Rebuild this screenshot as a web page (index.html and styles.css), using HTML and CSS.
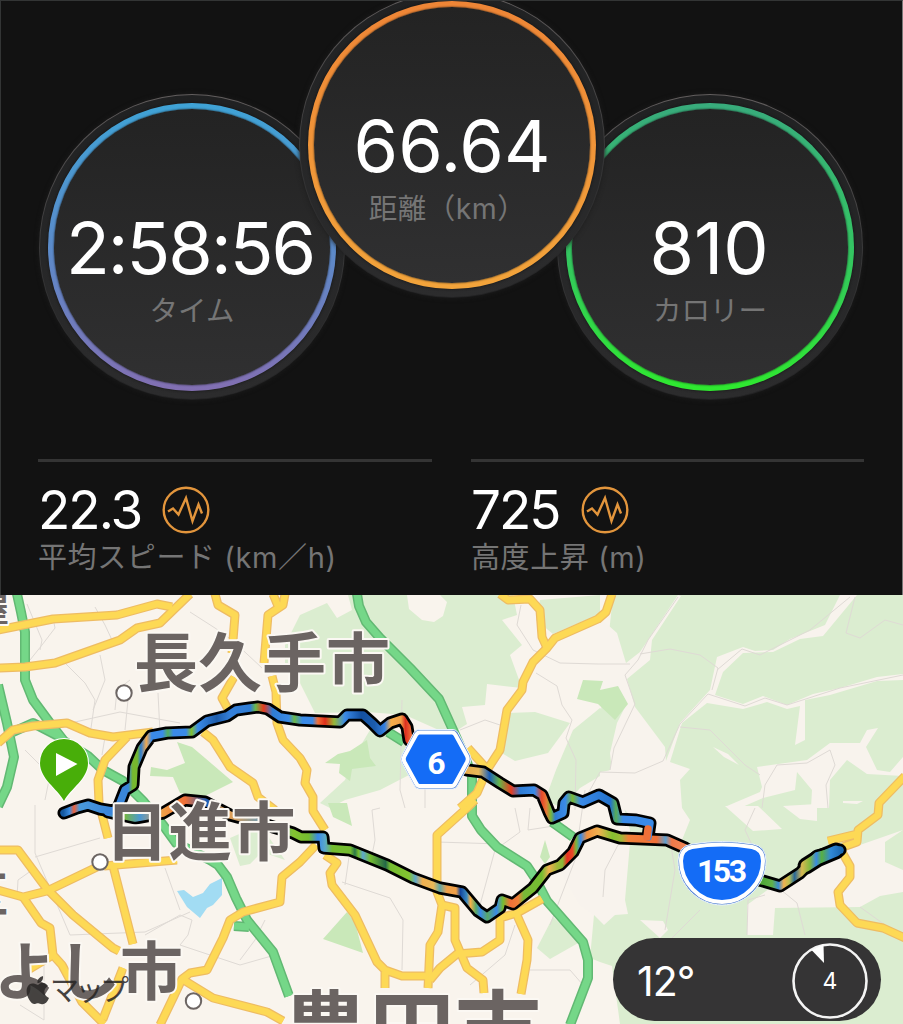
FILE: index.html
```html
<!DOCTYPE html>
<html lang="ja">
<head>
    <meta charset="UTF-8">
    <meta name="viewport" content="width=device-width, initial-scale=1.0">
    <title>サイクリング</title>
    <link rel="stylesheet" href="styles.css">
</head>
<body>
    <section class="summary">
        <div class="rings">
            <div class="ring time">
                <div class="ring_line">
                    <div class="ring_face">
                        <span class="ring_value">2:58:56</span>
                        <span class="ring_label">タイム</span>
                    </div>
                </div>
            </div>
            <div class="ring distance">
                <div class="ring_line">
                    <div class="ring_face">
                        <span class="ring_value">66.64</span>
                        <span class="ring_label">距離（km）</span>
                    </div>
                </div>
            </div>
            <div class="ring calorie">
                <div class="ring_line">
                    <div class="ring_face">
                        <span class="ring_value">810</span>
                        <span class="ring_label">カロリー</span>
                    </div>
                </div>
            </div>
        </div>
        <div class="stats">
            <div class="stat">
                <div class="stat_row">
                    <span class="stat_value">22.3</span>
                    <svg class="graph_icon" viewBox="0 0 48 48">
                        <circle cx="24" cy="24" r="22.3"/>
                        <path d="M6 25.5 L11 22.5 L16.5 28.5 L24 12 L30.5 35 L36.5 18.5 L40 27.5"/>
                    </svg>
                </div>
                <div class="stat_label">平均スピード (km／h)</div>
            </div>
            <div class="stat">
                <div class="stat_row">
                    <span class="stat_value">725</span>
                    <svg class="graph_icon" viewBox="0 0 48 48">
                        <circle cx="24" cy="24" r="22.3"/>
                        <path d="M6 25.5 L11 22.5 L16.5 28.5 L24 12 L30.5 35 L36.5 18.5 L40 27.5"/>
                    </svg>
                </div>
                <div class="stat_label">高度上昇 (m)</div>
            </div>
        </div>
    </section>

    <section class="map">
        <svg class="map_canvas" viewBox="0 595 903 429">
            <defs>
                <linearGradient id="upperColor" gradientUnits="userSpaceOnUse" x1="0" y1="0" x2="903" y2="0">
                    <stop offset="0.07" stop-color="#1458a0"/>
                    <stop offset="0.077" stop-color="#3a8be0"/>
                    <stop offset="0.082" stop-color="#f06038"/>
                    <stop offset="0.088" stop-color="#4a9ada"/>
                    <stop offset="0.12" stop-color="#3a86da"/>
                    <stop offset="0.142" stop-color="#3a86da"/>
                    <stop offset="0.147" stop-color="#76b82e"/>
                    <stop offset="0.152" stop-color="#76b82e"/>
                    <stop offset="0.156" stop-color="#2f7cd0"/>
                    <stop offset="0.162" stop-color="#f0a850"/>
                    <stop offset="0.168" stop-color="#3a8ae8"/>
                    <stop offset="0.18" stop-color="#3a8ae8"/>
                    <stop offset="0.186" stop-color="#52ae60"/>
                    <stop offset="0.192" stop-color="#3a8ae8"/>
                    <stop offset="0.206" stop-color="#3a8ae8"/>
                    <stop offset="0.212" stop-color="#80c030"/>
                    <stop offset="0.219" stop-color="#3a8ae8"/>
                    <stop offset="0.24" stop-color="#1d5cab"/>
                    <stop offset="0.255" stop-color="#3580da"/>
                    <stop offset="0.277" stop-color="#2e7cd4"/>
                    <stop offset="0.283" stop-color="#6bb84a"/>
                    <stop offset="0.292" stop-color="#e63a1e"/>
                    <stop offset="0.302" stop-color="#2e7cd4"/>
                    <stop offset="0.32" stop-color="#3a8ae8"/>
                    <stop offset="0.326" stop-color="#6bb84a"/>
                    <stop offset="0.335" stop-color="#3a8ae8"/>
                    <stop offset="0.346" stop-color="#3a8ae8"/>
                    <stop offset="0.352" stop-color="#f07038"/>
                    <stop offset="0.36" stop-color="#e02e1c"/>
                    <stop offset="0.37" stop-color="#96b838"/>
                    <stop offset="0.382" stop-color="#3a8ae8"/>
                    <stop offset="0.4" stop-color="#1350a0"/>
                    <stop offset="0.415" stop-color="#1c5cac"/>
                    <stop offset="0.426" stop-color="#3480e0"/>
                    <stop offset="0.433" stop-color="#f8ad48"/>
                    <stop offset="0.444" stop-color="#f0a048"/>
                    <stop offset="0.449" stop-color="#dd3020"/>
                    <stop offset="0.456" stop-color="#f07038"/>
                    <stop offset="0.52" stop-color="#e8b050"/>
                    <stop offset="0.53" stop-color="#e8b858"/>
                    <stop offset="0.542" stop-color="#1c60b8"/>
                    <stop offset="0.553" stop-color="#66b448"/>
                    <stop offset="0.566" stop-color="#e83c20"/>
                    <stop offset="0.576" stop-color="#2e7cd4"/>
                    <stop offset="0.592" stop-color="#3a8ae8"/>
                    <stop offset="0.6" stop-color="#e84828"/>
                    <stop offset="0.605" stop-color="#e87838"/>
                    <stop offset="0.61" stop-color="#78b838"/>
                    <stop offset="0.615" stop-color="#2e7cd4"/>
                    <stop offset="0.626" stop-color="#3a8ae8"/>
                    <stop offset="0.634" stop-color="#78b838"/>
                    <stop offset="0.643" stop-color="#3a8ae8"/>
                    <stop offset="0.676" stop-color="#2472cc"/>
                    <stop offset="0.682" stop-color="#56ac58"/>
                    <stop offset="0.69" stop-color="#3a8ae8"/>
                    <stop offset="0.72" stop-color="#3a8ae8"/>
                </linearGradient>
                <linearGradient id="lowerColor" gradientUnits="userSpaceOnUse" x1="0" y1="0" x2="903" y2="0">
                    <stop offset="0.12" stop-color="#3a8ae8"/>
                    <stop offset="0.137" stop-color="#78b838"/>
                    <stop offset="0.155" stop-color="#4a98d0"/>
                    <stop offset="0.18" stop-color="#f0a048"/>
                    <stop offset="0.205" stop-color="#f07038"/>
                    <stop offset="0.23" stop-color="#1c60b8"/>
                    <stop offset="0.25" stop-color="#f0a048"/>
                    <stop offset="0.3" stop-color="#4a98d0"/>
                    <stop offset="0.325" stop-color="#84c430"/>
                    <stop offset="0.342" stop-color="#74bc30"/>
                    <stop offset="0.352" stop-color="#3a8ae8"/>
                    <stop offset="0.36" stop-color="#5aa8c8"/>
                    <stop offset="0.368" stop-color="#74bc30"/>
                    <stop offset="0.388" stop-color="#74bc30"/>
                    <stop offset="0.393" stop-color="#2a7848"/>
                    <stop offset="0.397" stop-color="#74bc30"/>
                    <stop offset="0.402" stop-color="#5ca8d0"/>
                    <stop offset="0.41" stop-color="#74bc30"/>
                    <stop offset="0.427" stop-color="#246848"/>
                    <stop offset="0.432" stop-color="#74bc30"/>
                    <stop offset="0.453" stop-color="#84c430"/>
                    <stop offset="0.46" stop-color="#60a8c8"/>
                    <stop offset="0.468" stop-color="#f0b050"/>
                    <stop offset="0.48" stop-color="#e8b858"/>
                    <stop offset="0.487" stop-color="#60a8a8"/>
                    <stop offset="0.495" stop-color="#f0a048"/>
                    <stop offset="0.505" stop-color="#f0a048"/>
                    <stop offset="0.51" stop-color="#1448a0"/>
                    <stop offset="0.517" stop-color="#3a8ac0"/>
                    <stop offset="0.521" stop-color="#f8b048"/>
                    <stop offset="0.527" stop-color="#58a868"/>
                    <stop offset="0.532" stop-color="#3a8ae8"/>
                    <stop offset="0.54" stop-color="#58a868"/>
                    <stop offset="0.55" stop-color="#3a8ae8"/>
                    <stop offset="0.557" stop-color="#74bc30"/>
                    <stop offset="0.565" stop-color="#f07038"/>
                    <stop offset="0.574" stop-color="#f08038"/>
                    <stop offset="0.58" stop-color="#78b838"/>
                    <stop offset="0.6" stop-color="#74bc30"/>
                    <stop offset="0.608" stop-color="#f0b050"/>
                    <stop offset="0.617" stop-color="#a0b838"/>
                    <stop offset="0.623" stop-color="#88b838"/>
                    <stop offset="0.628" stop-color="#e83020"/>
                    <stop offset="0.634" stop-color="#e84828"/>
                    <stop offset="0.638" stop-color="#78b838"/>
                    <stop offset="0.643" stop-color="#3a8ae8"/>
                    <stop offset="0.65" stop-color="#f09040"/>
                    <stop offset="0.663" stop-color="#f0b050"/>
                    <stop offset="0.678" stop-color="#84c030"/>
                    <stop offset="0.688" stop-color="#a0b838"/>
                    <stop offset="0.696" stop-color="#f08038"/>
                    <stop offset="0.727" stop-color="#f07038"/>
                    <stop offset="0.737" stop-color="#60a0d0"/>
                    <stop offset="0.744" stop-color="#f07848"/>
                    <stop offset="0.76" stop-color="#f08858"/>
                    <stop offset="0.845" stop-color="#50a838"/>
                    <stop offset="0.855" stop-color="#60b048"/>
                    <stop offset="0.862" stop-color="#3a8ad0"/>
                    <stop offset="0.868" stop-color="#f0b050"/>
                    <stop offset="0.874" stop-color="#b8c050"/>
                    <stop offset="0.88" stop-color="#286898"/>
                    <stop offset="0.888" stop-color="#d8b850"/>
                    <stop offset="0.897" stop-color="#80b840"/>
                    <stop offset="0.904" stop-color="#3a8ae0"/>
                    <stop offset="0.91" stop-color="#58b040"/>
                    <stop offset="0.92" stop-color="#3088d8"/>
                    <stop offset="0.932" stop-color="#1c68b0"/>
                </linearGradient>

                <g id="greenRoads">
                    <path d="M17 594 L21 612 L25 632 L25 680 L33 700 L50 723 L64 741 L88 756 L103 770 L123 781 L143 801 L163 825 L176 843 L210 860 L218 865 L227 877 L236 898 L247 920 L273 952 L289 996"/>
                    <path d="M-2 685 L7 723 L14 757 L7 787 L-2 806"/>
                    <path d="M357 594 L359 606 L366 622 L380 638 L410 668 L439 699 L453 730 L465 757 L472 776 L472 816 L481 830 L497 847 L527 866 L535 878 L547 901 L583 942 L588 960 L588 978 L570 1025"/>
                    <path class="ramp" d="M13 732 L33 723 L60 737 M552 822 L573 837 M388 732 L404 742 M234 926 L249 927"/>
                </g>
                <g id="yellowRoads">
                    <path d="M-2 630 L53 619 L117 615 L157 604 L172 607"/>
                    <path d="M-2 668 L25 667 L55 663 L120 640 L137 628 L160 623 L190 594"/>
                    <path d="M215 594 L218 605 L235 615 L232 653 M234 677 L222 698 L228 709"/>
                    <path d="M273 594 L278 606 M285 594 L283 605 L268 615 L264 663 M272 676 L276 692 L277 723 L283 740 L300 758 L307 770 L305 783 L313 797 L313 811 L325 830"/>
                    <path d="M-2 743 L13 730 L33 726 L67 723 L90 733 L113 737 L153 732"/>
                    <path d="M127 737 L105 760 L98 780 L99 803 L108 838"/>
                    <path d="M203 732 L213 740 L230 767 L253 783 L258 797 L275 810"/>
                    <path d="M-2 850 L18 850 L47 889 L73 915 L113 948 L119 951"/>
                    <path d="M-2 890 L23 897 L47 891 L97 867 M104 866 L177 860"/>
                    <path d="M23 897 L41 923 L50 928 L53 955 L28 970 M53 955 L62 965 L82 1002 L104 1024"/>
                    <path d="M113 866 L133 944 M123 968 L103 1019"/>
                    <path d="M316 845 L300 862 L282 877 L280 902 L243 912 L230 920 L223 938 L207 970 L190 973 L182 979 L213 998 L267 1012 L283 1021 M182 979 L173 998 L160 1025"/>
                    <path d="M325 855 L337 863 L330 873 L332 885 L355 915 L377 962 L385 970 L402 976 L428 976 M385 972 L385 988"/>
                    <path d="M475 800 L468 807 L437 835 L437 892 L442 905 L438 932 L430 945 L428 988"/>
                    <path d="M442 905 L455 908 L455 940 L467 968 L483 980 L484 993"/>
                    <path d="M430 980 L440 968 L457 954 L482 952 L500 940 L500 918 L517 913 L542 899"/>
                    <path d="M516 913 L528 940 L527 960 L521 994"/>
                    <path d="M500 594 L508 600 L530 599 L540 610 L542 637 L547 648"/>
                    <path d="M612 594 L606 612 L598 619 L555 638 L547 648 L533 662 L523 682 L522 690 L507 710 L500 750 L487 770 L477 793 L460 808 M468 748 L487 769"/>
                    <path d="M905 776 L879 803 L878 815 L858 830 L857 842 L843 847 M857 834 L828 841"/>
                    <path d="M842 852 L850 866 L850 877 L838 892 L840 905 L857 923 L883 928 L905 938"/>
                </g>
                <path id="upperRoute" d="M64 813 L77 808 L88 805 L100 809 L112 811 L118 808 L125 790 L133 785 L134 767 L142 748 L151 736 L167 733 L192 732 L207 721 L227 716 L236 710 L250 708 L258 707 L268 709 L280 717 L300 720 L340 722 L347 715 L363 715 L372 723 L380 731 L390 723 L402 719 L407 727 L409 740 L436 762 L467 770 L483 772 L500 783 L513 791 L534 790 L542 795 L549 812 L552 818 L563 813 L564 803 L569 797 L583 802 L599 795 L613 803 L617 819 L636 820 L650 823 L648 837"/>
                <path id="lowerRoute" d="M108 812 L135 818 L163 813 L185 800 L205 802 L230 815 L260 823 L293 833 L301 837 L323 837 L324 848 L350 850 L387 865 L413 878 L440 888 L462 892 L478 911 L487 917 L500 908 L502 900 L513 904 L533 888 L547 870 L560 865 L573 852 L580 838 L597 831 L620 838 L667 840 L685 848 L720 870 L763 881 L780 886 L800 873 L817 856 L840 850"/>
            </defs>

            <!-- woods -->
            <g class="wood">
                <path d="M285 645 L300 615 L327 603 L337 618 L352 610 L348 595 L407 595 L409 609 L422 620 L434 622 L443 616 L447 602 L440 595 L513 595 L517 615 L502 620 L522 645 L510 655 L522 688 L487 684 L485 705 L462 707 L467 724 L450 735 L405 715 L367 712 L315 713 L300 683 L285 665 Z"/>
                <path d="M370 730 L405 740 L409 775 L380 790 L345 800 L330 808 L320 803 L345 780 L355 755 Z"/>
                <path d="M507 713 L535 712 L570 723 L548 753 L515 761 L500 752 Z"/>
                <path d="M540 600 L600 595 L600 614 L553 634 L536 620 Z"/>
                <path d="M573 730 L600 708 L618 722 L610 770 L580 788 L562 808 L545 800 L556 770 Z"/>
                <path d="M613 595 L903 595 L903 1024 L620 1024 L612 966 L600 962 L590 958 L594 915 L620 880 L630 830 L600 720 Z"/>
                <path d="M553 917 L580 942 L550 959 L537 948 Z"/>
                <path d="M230 838 L260 825 L285 860 L262 852 L250 864 L240 866 Z"/>
            </g>
            <g class="park">
                <path d="M177 742 L192 747 L205 758 L233 782 L203 797 L180 793 L173 777 L150 776 L151 767 L167 770 L185 763 Z"/>
                <path d="M325 763 L338 754 L350 751 L367 740 L370 758 L376 766 L352 769 L350 781 L339 773 L340 764 Z"/>
                <path d="M347 912 L355 922 L363 953 L323 939 Z M328 803 L347 803 L352 826 L333 817 Z"/>
                <path d="M545 840 L550 857 L545 864 L540 857 Z"/>
            </g>
            <g class="ground">
                <path d="M600 618 L617 633 L626 663 L640 652 L678 595 L681 596 L652 640 L650 660 L627 679 L635 707 L665 747 L666 761 L680 723 L710 690 L717 657 L743 647 L755 651 L773 650 L790 639 L825 625 L840 595 L857 595 L823 636 L800 639 L773 652 L743 653 L723 672 L715 695 L743 704 L763 696 L787 705 L813 694 L840 688 L877 677 L903 674 L903 680 L877 681 L830 695 L805 700 L805 740 L795 745 L800 706 L787 709 L767 702 L743 709 L707 703 L682 723 L670 762 L690 769 L680 780 L682 808 L690 820 L680 845 L648 836 L625 810 L600 800 L600 772 L612 770 L610 753 L617 723 L627 703 L615 692 L600 694 Z"/>
                <path d="M757 767 L807 760 L830 743 L860 743 L867 730 L878 728 L866 747 L877 770 L890 772 L903 757 L903 776 L867 774 L847 760 L830 780 L829 808 L811 808 L812 790 L797 772 L795 790 L763 798 L740 808 L727 806 L760 792 L762 787 Z"/>
                <path d="M725 806 L758 806 L782 829 L753 831 Z M783 806 L817 804 L817 821 L800 819 Z"/>
                <path d="M903 830 L885 842 L885 862 L903 870 L903 892 L880 896 L860 907 L775 908 L773 935 L747 935 L747 905 L770 888 L800 878 L830 856 L857 846 Z"/>
                <path d="M560 870 L600 838 L630 843 L625 900 L628 914 L615 915 L604 925 L594 915 L580 905 Z M640 920 L663 921 L668 930 L660 938 Z"/>
                <path d="M713 747 L728 754 L739 765 L724 757 Z M843 801 L863 801 L857 804 L843 803 Z"/>
            </g>
            <path class="park" d="M583 680 L603 681 L600 690 L618 686 L628 704 L615 720 L598 704 L577 699 Z"/>
            <path class="lake" d="M177 891 L184 890 L193 897 L203 893 L210 884 L222 878 L222 895 L213 905 L207 908 L200 918 L187 907 Z"/>

            <!-- small streets -->
            <g class="street">
                <path d="M27 604 L42 640 L40 650 M53 618 L55 628 L42 645 L30 660 M95 607 L105 625 L112 640 M190 612 L215 628 L232 640 L262 668 M65 663 L85 683 L95 700 L90 735 M100 655 L105 680 L93 710"/>
                <path d="M45 728 L75 722 L120 712 L180 723 M115 710 L117 690 L130 680 M128 700 L125 730 M158 693 L160 733 M105 737 L102 755 M25 750 L50 775 L45 800"/>
                <path d="M35 805 L35 853 L70 935 L145 932 L190 912 M35 857 L100 838 M17 897 L18 880 L35 868 M145 935 L180 915 L192 920 L188 935 L180 945 L240 965 L275 955 M165 868 L180 910 M240 960 L255 940 L265 920 M44 960 L44 1020 L20 1005"/>
                <path d="M380 808 L372 810 L375 840 L370 865 M350 850 L345 885 M342 882 L390 898 L403 920 L402 970 M437 842 L500 844 M515 808 L520 832 L495 850 L480 905 M530 808 L528 830 L560 825 M585 790 L575 860 L550 925 M515 925 L505 955 L470 985 M530 970 L570 970 L583 985"/>
                <path d="M521 605 L517 625 L533 650 L560 663 L598 664 L630 664 M536 673 L557 686 L562 705 L572 720 L566 738 L576 760 L575 810 M460 730 L485 720 L500 725 M580 808 L600 772 L635 773 L663 761 L680 724 L708 694 L745 706 L765 698 L787 705 L840 688 L903 675 M402 700 L400 790 L405 808 M425 780 L425 808"/>
                <path d="M678 597 L648 640 L638 660 L625 675 L635 704 L614 748 L610 770 M640 654 L670 649 L700 655 L718 668 L712 690 M717 670 L742 649 L760 655 L810 630 L850 597 M680 727 L710 730 L745 765 L760 775 M762 808 L765 785 L777 765 L807 763 L830 750 L835 765 L826 785 L828 808 M855 597 L846 633 L860 638 L885 620 L903 625"/>
                <path d="M603 897 L605 870 L618 845 M755 808 L745 830 L752 845 M747 935 L748 900 L765 895 M775 885 L797 903 L805 935 M860 907 L885 925 M670 840 L675 870 L665 930 M700 910 L670 940"/>
            </g>

            <use href="#greenRoads" class="green_case"/>
            <use href="#greenRoads" class="green_fill"/>
            <use href="#yellowRoads" class="yellow_case"/>
            <use href="#yellowRoads" class="yellow_fill"/>

            <use href="#lowerRoute" class="route_case"/>
            <use href="#upperRoute" class="route_case"/>
            <path class="route_case wide" d="M806 866 L817 859 L836 851"/>
            <use href="#lowerRoute" class="route lower"/>
            <path class="route lower wide" d="M806 866 L817 859 L836 851"/>
            <use href="#upperRoute" class="route upper"/>
            <path class="route joint" d="M648 829 L647 837"/>

            <!-- place names -->
            <g class="town">
                <circle cx="124" cy="693" r="7.7"/>
                <circle cx="100" cy="862" r="7.7"/>
                <circle cx="193.5" cy="1001" r="7.7"/>
            </g>
            <g class="place">
                <text x="134" y="686" font-size="64">長久手市</text>
                <text x="105" y="855" font-size="63.5">日進市</text>
                <text x="-69" y="994" font-size="63">みよし市</text>
                <text x="283" y="1063" font-size="86">豊田市</text>
                <text x="-23" y="621" font-size="32">屋</text>
                <text x="-40" y="912" font-size="48">区</text>
            </g>

            <path class="pin" d="M64 801 C57 788 40 779 40 763 A24 24 0 0 1 88 763 C88 779 71 788 64 801 Z"/>
            <path class="pin_play" d="M56 753 L77.5 764 L56 776 Z"/>

            <!-- road shields -->
            <path class="shield_edge" d="M419 729.5 H453 Q456 729.5 458 732.5 L470 755 Q472 759 470 763 L458 785 Q456 789 453 789 H419 Q416 789 414 785 L402 763 Q400 759 402 755 L414 732.5 Q416 729.5 419 729.5 Z"/>
            <path class="shield" d="M419.5 732.5 H452 Q454 732.5 455.5 735 L467 756 Q468.5 759 467 762 L455.5 783 Q454 786 452 786 H419.5 Q417.5 786 416 783 L404.5 762 Q403 759 404.5 756 L416 735 Q417.5 732.5 419.5 732.5 Z"/>
            <text class="shield_text" x="436.5" y="773.5">6</text>
            <path class="shield_edge" d="M692 844 Q722 839 753 844 Q766 846 766 861 C766 884 747 905 722 905 C697 905 678 884 678 861 Q678 846 692 844 Z"/>
            <path class="shield" d="M692 847 Q722 842 752 847 Q763 849 763 861 C763 882 745 902 722 902 C699 902 681 882 681 861 Q681 849 692 847 Z"/>
            <text class="shield_text" x="722" y="881.5" textLength="50">153</text>

            <!-- attribution -->
            <g class="credit">
                <path d="M38 985 C42 981 46 983 48 986 C43 989 43 995 49 998 C47 1003 44 1005 41 1004 C38 1003 37 1003 35 1004 C31 1005 25 995 27 988 C29 982 34 983 38 985 Z M37.5 983 C37 979 40 977 43 976 C43.5 980 41 983 37.5 983 Z"/>
                <text x="50" y="1001" textLength="79">マップ</text>
            </g>
        </svg>
        <div class="weather">
            <span class="temp">12°</span>
            <svg class="wind" viewBox="0 0 78 78">
                <circle cx="39" cy="39" r="36.5"/>
                <path d="M20.5 8 L32.5 2.5 L33 21 Z"/>
                <text x="39" y="47">4</text>
            </svg>
        </div>
    </section>
</body>
</html>
```
FILE: styles.css
```css
*{
    box-sizing: border-box;
}
body{
    margin: 0;
    width: 903px;
    height: 1024px;
    overflow: hidden;
    background: #121212;
    font-family: Inter, "Noto Sans CJK JP", sans-serif;
}
.summary{
    height: 595px;
    overflow: hidden;
    border: 1px solid #333535;
    border-right-color: #777;
    border-bottom: none;
}
.rings{
    display: flex;
    height: 458px;
    padding-left: 38px;
}
.ring{
    flex: none;
    width: 306px;
    height: 306px;
    margin-top: 93px;
    padding: 8px;
    border-radius: 50%;
    border: 1px solid transparent;
    background: linear-gradient(#202122, #2c2c2d) padding-box,
                linear-gradient(#625e5e, #363637 55%, #222223) border-box;
    box-shadow: 0 0 5px #1d1d1d;
}
.ring_line{
    height: 100%;
    padding: 6px;
    border-radius: 50%;
    box-shadow: 0 0 3px #111;
}
.ring_face{
    display: flex;
    flex-direction: column;
    align-items: center;
    height: 100%;
    padding-top: 95px;
    border-radius: 50%;
    background: linear-gradient(#232323, #303031);
    box-shadow: 0 0 2px #111;
}
.ring_value{
    font-size: 72px;
    line-height: 88px;
    color: #fff;
    white-space: nowrap;
}
.ring_label{
    font-size: 28.5px;
    line-height: 40px;
    margin-top: -1px;
    color: #757575;
}
.time .ring_line{
    background: linear-gradient(#3fa3d6, #5b8bca 50%, #826fb2);
}
.time .ring_value{
    letter-spacing: -2px;
    margin-left: -4px;
}
.distance{
    position: relative;
    z-index: 1;
    margin: -9px -48px 0 -46px;
}
.distance .ring_line{
    background: linear-gradient(#ee8536, #f2a43b);
}
.distance .ring_label{
    margin-left: -9px;
    letter-spacing: .5px;
}
.calorie .ring_line{
    background: linear-gradient(#38ab7c, #34c463 50%, #2fe92f);
}
.calorie .ring_value{
    letter-spacing: 0;
    margin-left: -2px;
}

.stats{
    display: grid;
    grid-template-columns: 394px 393px;
    gap: 39px;
    padding-left: 37px;
}
.stat{
    border-top: 3px solid #343434;
}
.stat_row{
    display: flex;
    align-items: center;
    gap: 21px;
    height: 78px;
    padding-top: 18px;
}
.stat_value{
    font-size: 53px;
    line-height: 60px;
    letter-spacing: -2px;
    color: #fff;
}
.graph_icon{
    width: 48px;
    height: 48px;
    fill: none;
    stroke: #e2953c;
    stroke-width: 2.4;
}
.stat_label{
    font-size: 29px;
    line-height: 40px;
    letter-spacing: .6px;
    margin-top: -2px;
    color: #757575;
}

.map{
    position: relative;
    height: 429px;
    background: #f9f4ed;
}
.map_canvas{
    display: block;
    width: 903px;
    height: 429px;
}
.wood{
    fill: #dbedd0;
}
.park{
    fill: #c9e8b9;
}
.ground{
    fill: #f8f3ed;
}
.lake{
    fill: #a2dcf3;
}
.street{
    fill: none;
    stroke: #dfdad5;
    stroke-width: 1;
}
.green_case,
.green_fill,
.yellow_case,
.yellow_fill,
.route_case,
.route{
    fill: none;
    stroke-linejoin: round;
}
.green_case{
    stroke: #62b873;
    stroke-width: 10;
}
.green_fill{
    stroke: #75d788;
    stroke-width: 7;
}
.yellow_case{
    stroke: #eebc63;
    stroke-width: 9;
}
.yellow_fill{
    stroke: #fdd955;
    stroke-width: 6.5;
}
.route_case{
    stroke: #000;
    stroke-width: 13;
    stroke-linecap: round;
}
.route{
    stroke-width: 7.5;
    stroke-linecap: round;
}
.route_case.wide{
    stroke-width: 17;
}
.route.wide{
    stroke-width: 11;
}
.upper{
    stroke: url(#upperColor);
}
.lower{
    stroke: url(#lowerColor);
}
.joint{
    stroke: #ee7038;
}
.town circle{
    fill: #fff;
    stroke: #6c6563;
    stroke-width: 2;
}
.place{
    font-family: "Noto Sans CJK JP", sans-serif;
    font-weight: 700;
    fill: #6b6462;
    stroke: #fbf8f3;
    stroke-width: 4;
    stroke-linejoin: round;
    paint-order: stroke;
}
.pin{
    fill: #48ae09;
    stroke: #fff;
    stroke-width: 2;
    paint-order: stroke;
}
.pin_play{
    fill: #fff;
}
.shield_edge{
    fill: #4f80d0;
    stroke: #e9f2ff;
    stroke-width: 1;
}
.shield{
    fill: #146cf6;
    stroke: #fff;
    stroke-width: 4;
}
.shield_text{
    font-family: Roboto, sans-serif;
    font-size: 32px;
    font-weight: 700;
    fill: #fff;
    text-anchor: middle;
}
.credit{
    font-family: "Noto Sans CJK JP", sans-serif;
    font-size: 29px;
    fill: #262423;
    opacity: .85;
}
.weather{
    position: absolute;
    right: 22px;
    bottom: 3px;
    display: flex;
    align-items: center;
    justify-content: space-between;
    width: 268px;
    height: 83px;
    padding: 2px 12px 0 24px;
    border-radius: 42px;
    background: #353435;
}
.temp{
    font-size: 41px;
    letter-spacing: -1px;
    color: #fff;
}
.wind{
    width: 78px;
    height: 78px;
    fill: #fff;
}
.wind circle{
    fill: none;
    stroke: #f4f4f4;
    stroke-width: 2.6;
}
.wind text{
    font-size: 23px;
    text-anchor: middle;
}
```
